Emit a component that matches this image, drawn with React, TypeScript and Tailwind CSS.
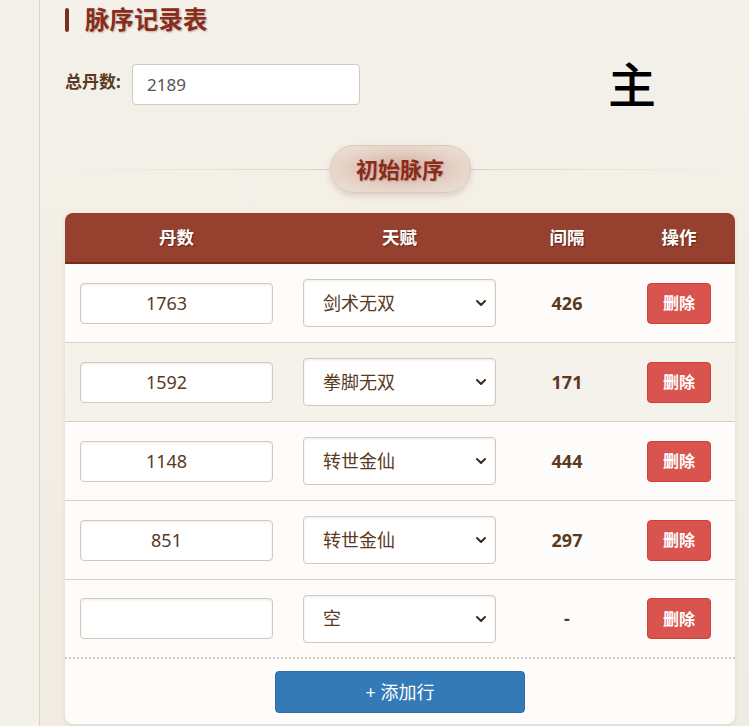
import React from "react";

const rows = [
  { dan: "1763", talent: "剑术无双", gap: "426" },
  { dan: "1592", talent: "拳脚无双", gap: "171" },
  { dan: "1148", talent: "转世金仙", gap: "444" },
  { dan: "851", talent: "转世金仙", gap: "297" },
  { dan: "", talent: "空", gap: "-" },
];

const talents = ["空", "剑术无双", "拳脚无双", "转世金仙"];

function Chevron() {
  return (
    <svg width="12" height="8" viewBox="0 0 12 8" className="absolute right-[9px] top-1/2 -translate-y-1/2 pointer-events-none">
      <path d="M2 2 L6 6 L10 2" fill="none" stroke="#3b2a1e" strokeWidth="2" strokeLinecap="round" strokeLinejoin="round" />
    </svg>
  );
}

export default function App() {
  const font = { fontFamily: '"Noto Sans", "Noto Sans CJK SC", sans-serif' };
  return (
    <div className="w-[749px] h-[726px] overflow-hidden flex" style={font}>
      <div className="w-[40px] shrink-0 bg-[#f4f1ea] border-r border-[#ddd5c8]" />
      <div className="flex-1 bg-gradient-to-b from-[#f4f1ea] to-[#f1ece2] pl-[25px] pr-[14px] pt-[8px] flex flex-col">
        <div className="flex items-center h-[24px]">
          <div className="w-[4px] h-[24px] rounded-full bg-[#7a2e1c]" />
          <h1 className="ml-[16px] text-[24.5px] leading-[24px] font-bold text-[#8b2c1b] [text-shadow:1px_1px_2px_rgba(0,0,0,0.25)]">
            脉序记录表
          </h1>
        </div>

        <div className="flex items-center mt-[32px] h-[41px]">
          <span className="text-[17px] font-bold text-[#5a3a1e] w-[67px] -mt-[6px] whitespace-nowrap">总丹数:</span>
          <div className="w-[228px] h-[41px] bg-white border border-[#cfcac2] rounded-[4px] flex items-center pl-[14px] text-[17px] text-[#555]">
            2189
          </div>
          <span className="ml-[248px] text-[48px] leading-none font-medium text-black">主</span>
        </div>

        <div className="relative mt-[40px] h-[48px] flex justify-center items-center">
          <div className="absolute left-0 right-0 top-1/2 h-px bg-gradient-to-r from-transparent via-[#d8ccb9] to-transparent" />
          <div className="relative w-[141px] h-[48px] rounded-full border border-[#dcc9bd] flex items-center justify-center text-[22px] font-bold text-[#8b2c1b] shadow-[0_3px_6px_rgba(120,80,60,0.2)] bg-[radial-gradient(ellipse_at_center,#d3a99c_0%,#e6d3c8_60%,#eee2d8_100%)] [text-shadow:1px_1px_1px_rgba(0,0,0,0.15)]">
            初始脉序
          </div>
        </div>

        <div className="mt-[20px] w-[670px] rounded-[8px] overflow-hidden bg-[#fdfcfa] shadow-[0_2px_6px_rgba(0,0,0,0.08)]">
          <div className="grid grid-cols-[223px_223px_112px_112px] h-[51px] bg-[#964130] border-b-2 border-[#7a2a1d] text-white text-[17.5px] font-bold [text-shadow:1px_1px_1px_rgba(0,0,0,0.4)]">
            <div className="flex items-center justify-center">丹数</div>
            <div className="flex items-center justify-center">天赋</div>
            <div className="flex items-center justify-center">间隔</div>
            <div className="flex items-center justify-center">操作</div>
          </div>
          {rows.map((r, i) => (
            <div
              key={i}
              className={`grid grid-cols-[223px_223px_112px_112px] h-[79px] ${i === 1 ? "bg-[#f5f1eb]" : "bg-[#fdfcfa]"} ${i === 4 ? "border-b-2 border-dotted border-[#d6ccbd]" : "border-b border-[#d9cfc2]"}`}
            >
              <div className="flex items-center justify-center px-[15px]">
                <div className="w-[193px] h-[41px] bg-white border border-[#d5c8b8] rounded-[4px] shadow-[inset_0_1px_3px_rgba(0,0,0,0.08)] flex items-center justify-center pr-[20px] text-[18px] text-[#5a3a1e]">
                  {r.dan}
                </div>
              </div>
              <div className="flex items-center justify-center px-[15px]">
                <div className="relative w-[193px] h-[48px]">
                  <select
                    defaultValue={r.talent}
                    className="appearance-none w-full h-full bg-white border border-[#d5c8b8] rounded-[4px] shadow-[inset_0_1px_3px_rgba(0,0,0,0.08)] pl-[19px] text-[18px] text-[#5a3a1e] outline-none"
                    style={font}
                  >
                    {talents.map((t) => (
                      <option key={t} value={t}>{t}</option>
                    ))}
                  </select>
                  <Chevron />
                </div>
              </div>
              <div className="flex items-center justify-center text-[18px] font-bold text-[#5a3a1e]">
                {r.gap}
              </div>
              <div className="flex items-center justify-center">
                <button className="w-[64px] h-[41px] rounded-[4px] bg-[#d9534f] border border-[#d43f3a] text-white text-[16px] font-bold">
                  删除
                </button>
              </div>
            </div>
          ))}
          <div className="flex justify-center pt-[12px] pb-[11px]">
            <button className="w-[250px] h-[42px] rounded-[4px] bg-[#337ab7] border border-[#2e6da4] text-white text-[18px]">
              + 添加行
            </button>
          </div>
        </div>
      </div>
    </div>
  );
}
